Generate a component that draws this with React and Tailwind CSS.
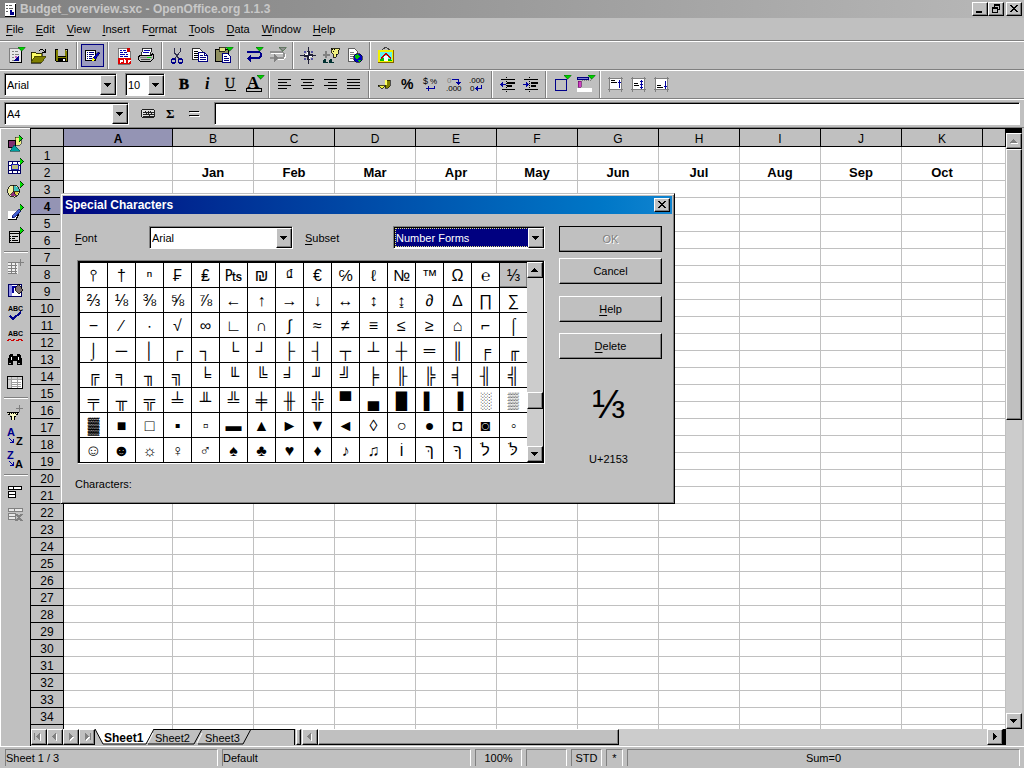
import React, { useState } from "react";

const raised =
  "border border-t-white border-l-white border-r-black border-b-black bg-[#c0c0c0] shadow-[inset_-1px_-1px_0_#808080]";
const sunken =
  "border border-t-[#808080] border-l-[#808080] border-r-white border-b-white shadow-[inset_1px_1px_0_#000]";

const menus = ["File", "Edit", "View", "Insert", "Format", "Tools", "Data", "Window", "Help"];
const menuKeys = [0, 0, 0, 0, 1, 0, 0, 0, 0];
const columns = ["A", "B", "C", "D", "E", "F", "G", "H", "I", "J", "K", ""];
const months = ["", "Jan", "Feb", "Mar", "Apr", "May", "Jun", "Jul", "Aug", "Sep", "Oct", ""];
const rows = Array.from({ length: 36 }, (_, i) => i + 1);

const glyphs = [
  "⫯", "†", "ⁿ", "₣", "₤", "₧", "₪", "₫", "€", "℅", "ℓ", "№", "™", "Ω", "℮", "⅓",
  "⅔", "⅛", "⅜", "⅝", "⅞", "←", "↑", "→", "↓", "↔", "↕", "↨", "∂", "∆", "∏", "∑",
  "−", "∕", "∙", "√", "∞", "∟", "∩", "∫", "≈", "≠", "≡", "≤", "≥", "⌂", "⌐", "⌠",
  "⌡", "─", "│", "┌", "┐", "└", "┘", "├", "┤", "┬", "┴", "┼", "═", "║", "╒", "╓",
  "╔", "╕", "╖", "╗", "╘", "╙", "╚", "╛", "╜", "╝", "╞", "╟", "╠", "╡", "╢", "╣",
  "╤", "╥", "╦", "╧", "╨", "╩", "╪", "╫", "╬", "▀", "▄", "█", "▌", "▐", "░", "▒",
  "▓", "■", "□", "▪", "▫", "▬", "▲", "►", "▼", "◄", "◊", "○", "●", "◘", "◙", "◦",
  "☺", "☻", "☼", "♀", "♂", "♠", "♣", "♥", "♦", "♪", "♫", "וֹ", "ךְ", "ךָ", "לֹ", "לֹּ",
];

const Underlined = ({ text, at = 0 }) => (
  <>
    {text.slice(0, at)}
    <span className="underline underline-offset-2">{text[at]}</span>
    {text.slice(at + 1)}
  </>
);

/* Small drop-down marks that sit on the corner of an icon */
const Down = ({ x = 14, y = 3, fill = "#00d000" }) => (
  <path d={`M${x} ${y}h7v1h-1v1h-1v1h-1v1h-1v-1h-1v-1h-1v-1h-1z`} fill={fill} stroke="#004000" strokeWidth="0.3" />
);
const Right = ({ x = 16, y = 3 }) => (
  <>
    <path d={`M${x} ${y - 1}h1v1h1v1h1v1h1v1h-1v1h-1v1h-1v1h-1z`} fill="#003000" />
    <path d={`M${x} ${y}h1v1h1v1h1v1h-1v1h-1v1h-1z`} fill="#00e000" />
  </>
);

const icons = {
  newDoc: (
    <>
      <path d="M5 4h12v15H5z" fill="#808080" />
      <path d="M6 5h11v13H6z" fill="#e8e8e8" />
      <path d="M17 5h1v14H6v-1h11z" fill="#000" />
      <path d="M8 7h2M8 10h2M8 13h2M8 16h2M11 7h3M11 10h4" stroke="#808080" transform="translate(0 .5)" />
      <path d="M15 12v5h-5v-1l2-1 1-2z" fill="#00008b" />
      <path d="M11 12h2v2h-2z" fill="#c060c0" />
      <Down />
    </>
  ),
  open: (
    <>
      <path d="M4 8h4l1 1h6v3h3l-4 7H4z" fill="#808000" stroke="#000" strokeWidth="0.6" />
      <path d="M5 9h3l1 1h5v2H8l-3 5z" fill="#ffff66" />
      <path d="M4 18 8 12h11l-4 6z" fill="#808000" stroke="#404000" strokeWidth="0.8" />
      <path d="M12 6h1V5h3v1h1v1h1V5h1v4h-4V8h2V7h-1V6h-3v1h-1z" fill="#000" />
    </>
  ),
  save: (
    <>
      <path d="M5 5h13v13H6l-1-1z" fill="#000" />
      <path d="M6 6h11v11H6z" fill="#808000" />
      <path d="M8 5h7v7H8z" fill="#c0c0c0" />
      <path d="M8 12h8v1H8zM8 14h8v4H8z" fill="#000" />
      <path d="M13 15h2v2h-2z" fill="#fff" />
      <path d="M16 6h1v1h-1z" fill="#c0c0c0" />
    </>
  ),
  edit: (
    <>
      <path d="M4.500 6.500h10v10h-10z" fill="#fff" stroke="#000" />
      <path d="M6 8.500h1M8 8.500h5M6 10.500h1M8 10.500h5M6 12.500h1M8 12.500h3M6 14.500h1M8 14.500h3" stroke="#000080" />
      <path d="m17 8 2 1-5 7-3 1 1-3z" fill="#0000c0" stroke="#000" strokeWidth="0.5" />
      <path d="m12 14 2 2-3 1z" fill="#ffff00" />
    </>
  ),
  pdf: (
    <>
      <path d="M6 4h9l3 3v13H6z" fill="#fff" stroke="#606060" strokeWidth="0.8" />
      <path d="M8 6.500h2M11 6.500h3M8 8.500h3M12 8.500h3M8 10.500h5M14 10.500h2M8 12.500h3M12 12.500h4" stroke="#0000b0" />
      <path d="M15 4h3v4h-3z" fill="#d00000" />
      <path d="M6 14h13v6H6z" fill="#e00000" />
      <path d="M8.500 19v-3h2v1h-2M12.500 15v3h1v-2M16.500 19v-3h2M16 17.500h2" stroke="#fff" fill="none" />
    </>
  ),
  print: (
    <>
      <path d="M8 4h9l-2 7H6z" fill="#fff" stroke="#000" strokeWidth="0.8" />
      <path d="M9 6.500h6M8 8.500h6" stroke="#0000b0" />
      <path d="M4.500 11.500h12l1-2 1 1v4l-3 3h-10l-2-2v-2z" fill="#c0c0c0" stroke="#000" />
      <path d="M5 13h12v1H5z" fill="#808080" />
      <path d="M6 15h9v1H6z" fill="#404040" />
      <path d="M12 13h4v1h-4z" fill="#00e000" />
    </>
  ),
  cut: (
    <g fill="none" stroke="#00008b">
      <path d="M8 4v4l6 8M14 4v4l-6 8" stroke="#303050" />
      <circle cx="7.500" cy="17" r="2" strokeWidth="1.500" />
      <circle cx="14.500" cy="17" r="2" strokeWidth="1.500" />
    </g>
  ),
  copy: (
    <>
      <path d="M3.500 4.500h7l3 3v8h-10z" fill="#fff" stroke="#303030" />
      <path d="M5 7.500h4M5 9.500h5M5 11.500h4M5 13.500h4" stroke="#000" />
      <path d="M9.500 8.500h6l3 3v6h-9z" fill="#fff" stroke="#000080" />
      <path d="M11 11.500h3M11 13.500h6M11 15.500h6M15.500 9v2.500h3" stroke="#000080" fill="none" />
    </>
  ),
  paste: (
    <>
      <path d="M3.500 5.500h13v12h-13z" fill="#909060" stroke="#000" />
      <path d="M7 3h6v4H7z" fill="#e0e080" stroke="#000" strokeWidth="0.7" />
      <path d="M10.500 9.500h5l3 3v6h-8z" fill="#fff" stroke="#000080" />
      <path d="M12 12.500h3M12 14.500h5M12 16.500h5" stroke="#000080" />
      <Down />
    </>
  ),
  undo: (
    <>
      <path d="M4 8h11q3 0 3 3t-3 3H6" fill="none" stroke="#00008b" strokeWidth="2" />
      <path d="M3 14h1l4-4v8z" fill="#00008b" />
      <Down x={13} />
    </>
  ),
  redo: (
    <>
      <path d="M5 9h11q3 0 3 3t-3 3h-4" fill="none" stroke="#fff" strokeWidth="2" />
      <path d="M4 8h11q3 0 3 3t-2 3h-5M4 14h5" fill="none" stroke="#909090" strokeWidth="2" />
      <path d="M8 10v8l4-4z" fill="#808080" />
      <Down x={13} fill="#909090" />
    </>
  ),
  navigator: (
    <>
      <path d="m11.500 3 1.500 6.500 6 2-6 2-1.500 6.500-1.500-6.500-7-2 7-2z" fill="#202038" />
      <path d="M11 6v5H6l4-1zM12 17v-5h5l-4 1z" fill="#fff" />
      <path d="M7 7h2v2H7zM14 14h2v2h-2zM14 7h2v2h-2zM7 14h2v2H7z" fill="#5050a0" />
    </>
  ),
  stylist: (
    <>
      <path d="M6 7v7M3 10.500h7" stroke="#808080" strokeWidth="2" />
      <path d="M11 4h8v2h-1v4h-2v3h-3v-3l-2-2z" fill="#f0f080" stroke="#000" strokeWidth="0.8" />
      <path d="M12 5h1v1h-1zM14 5h1v1h-1zM13 7h1v1h-1z" fill="#000" />
      <path d="M4 15h2v3h2v1H3v-2zM10 15h2v3h2v1H9v-2z" fill="#003030" />
    </>
  ),
  hyperlink: (
    <>
      <path d="M5.500 4.500h6l3 3v10h-9z" fill="#fff" stroke="#606060" />
      <path d="M7 8.500h4M7 10.500h6M7 12.500h4M7 14.500h3" stroke="#808080" />
      <circle cx="15" cy="14" r="4.500" fill="#0000c0" stroke="#000" strokeWidth="0.6" />
      <path d="m12 11 3-1 2 3-3 2-2-1zM15 16h3l-2 2z" fill="#00c000" />
    </>
  ),
  gallery: (
    <>
      <path d="m8 6 4-3 4 3" fill="none" stroke="#404040" />
      <path d="M4 6h16v13H4z" fill="#806000" />
      <path d="M4 6h15v12H4z" fill="#f0f000" />
      <path d="M6 8h12v9H6z" fill="#60f0f0" />
      <path d="M6 17v-2l5-2 7 3v1z" fill="#00c000" />
      <path d="M10 12h4v5h-4z" fill="#fff" />
      <path d="m7 14 5-4 5 4" fill="none" stroke="#c00000" strokeWidth="1.500" />
    </>
  ),
  bold: <text x="6" y="16" fontFamily="Liberation Serif" fontWeight="700" fontSize="15" stroke="#000" strokeWidth="0.5">B</text>,
  italic: <text x="9" y="16" fontFamily="Liberation Serif" fontStyle="italic" fontWeight="700" fontSize="16">i</text>,
  underline: (
    <>
      <text x="6" y="15" fontFamily="Liberation Serif" fontSize="14" stroke="#000" strokeWidth="0.3">U</text>
      <path d="M6 17.500h11" stroke="#000" />
    </>
  ),
  fontColor: (
    <>
      <text x="5" y="15" fontFamily="Liberation Serif" fontWeight="700" fontSize="17">A</text>
      <path d="M4.500 15.500h15v3h-15z" fill="#c0c0c0" stroke="#000" />
      <Down x={15} y={2} />
    </>
  ),
  left: <path d="M5 6.500h13M5 9.500h9M5 12.500h13M5 15.500h9" stroke="#000" />,
  center: <path d="M5 6.500h13M7 9.500h9M5 12.500h13M7 15.500h9" stroke="#000" />,
  right: <path d="M5 6.500h13M9 9.500h9M5 12.500h13M9 15.500h9" stroke="#000" />,
  justify: <path d="M5 6.500h13M5 9.500h13M5 12.500h13M5 15.500h13" stroke="#000" />,
  currency: (
    <>
      <path d="M12 7h5v6l-2 2h-3z" fill="#808000" stroke="#000" strokeWidth="0.6" />
      <path d="M12 7h2v5h-2z" fill="#ffff60" />
      <path d="M5 12h6v2l-1 1H8l-3-2z" fill="#f0f040" stroke="#000" strokeWidth="0.7" />
    </>
  ),
  percent: <text x="5" y="16" fontFamily="Liberation Sans" fontWeight="700" fontSize="14">%</text>,
  standard: (
    <>
      <text x="4" y="11" fontFamily="Liberation Sans" fontSize="9">$</text>
      <text x="11" y="11" fontFamily="Liberation Sans" fontSize="8">%</text>
      <path d="M7 15.500h8M9.500 13v5M15.500 13v3" stroke="#0000a0" fill="none" />
    </>
  ),
  addDecimal: (
    <>
      <text x="5" y="10" fontFamily="Liberation Sans" fontSize="8" fill="#808080">0</text>
      <path d="M10 6.500h6.500v4" stroke="#0000a0" fill="none" />
      <path d="M14 9h5l-2 3h-1z" fill="#0000a0" />
      <text x="4" y="18" fontFamily="Liberation Sans" fontSize="8">.000</text>
    </>
  ),
  removeDecimal: (
    <>
      <text x="4" y="10" fontFamily="Liberation Sans" fontSize="8">.000</text>
      <text x="5" y="18" fontFamily="Liberation Sans" fontSize="8">0</text>
      <path d="M11 15.500h5.500v-4" stroke="#0000a0" fill="none" />
      <path d="M13 13v5l-3-2v-1z" fill="#0000a0" />
    </>
  ),
  outdent: (
    <>
      <path d="M10.500 4v15" stroke="#000" strokeDasharray="1 1" />
      <path d="M5 6.500h14M6 16.500h13" stroke="#000" />
      <path d="M11 9.500h8M11 12.500h5" stroke="#000" strokeWidth="2" />
      <path d="M6 11.500h4" stroke="#0000a0" />
      <path d="M7 9v5l-3-2v-1z" fill="#0000a0" />
    </>
  ),
  indent: (
    <>
      <path d="M10.500 4v15" stroke="#000" strokeDasharray="1 1" />
      <path d="M5 6.500h14M6 16.500h13" stroke="#000" />
      <path d="M12 9.500h7M12 12.500h5" stroke="#000" strokeWidth="2" />
      <path d="M4 11.500h4" stroke="#0000a0" />
      <path d="M7 9v5l3-2v-1z" fill="#0000a0" />
    </>
  ),
  borders: (
    <>
      <path d="M5.500 6.500h11v11h-11z" fill="none" stroke="#00008b" />
      <Down x={14} y={2} />
    </>
  ),
  background: (
    <>
      <path d="M4.500 4.500h11v2h-11z" fill="#8080d0" stroke="#000080" />
      <path d="M5 8h3v6H5z" fill="#d040c0" stroke="#600060" strokeWidth="0.6" />
      <path d="M9 7.500h10" stroke="#808080" strokeDasharray="1 1" />
      <path d="M4 15h15v4H4z" fill="#fff" />
      <Down x={15} y={2} />
    </>
  ),
  alignTop: (
    <>
      <path d="M5 6h12v11H5z" fill="#fff" />
      <path d="M4 5.500h15M4 16.500h15M5.500 4v15M17.500 4v15" stroke="#808080" />
      <path d="M7 7.500h4M7 9.500h6" stroke="#000" />
      <path d="M15.500 15V7M14 9.500h3" stroke="#0000a0" fill="none" />
    </>
  ),
  alignMiddle: (
    <>
      <path d="M5 6h12v11H5z" fill="#fff" />
      <path d="M4 5.500h15M4 16.500h15M5.500 4v15M17.500 4v15" stroke="#808080" />
      <path d="M7 10.500h4M7 12.500h5" stroke="#000" />
      <path d="M14.500 7v9M13 8.500h3M13 11.500h3M13 14.500h3" stroke="#0000a0" fill="none" />
    </>
  ),
  alignBottom: (
    <>
      <path d="M5 6h12v11H5z" fill="#fff" />
      <path d="M4 5.500h15M4 16.500h15M5.500 4v15M17.500 4v15" stroke="#808080" />
      <path d="M7 12.500h4M7 14.500h6" stroke="#000" />
      <path d="M15.500 8v8M14 13.500h3" stroke="#0000a0" fill="none" />
    </>
  ),
  autopilot: (
    <>
      <path d="M5 7h12v1h1v7h-1v1H5v-1H4V8h1z" fill="#202020" />
      <path d="M6 9h2v1H6zM9 9h2v1H9zM12 9h1v1h-1zM14 9h3v1h-3zM6 11h3v1H6zM10 11h1v1h-1zM12 11h2v1h-2zM15 11h2v1h-2zM6 13h6v1H6zM13 13h4v1h-4zM5 8h12v1H5zM5 9h1v6H5z" fill="#e0e0e0" />
    </>
  ),
  sum: <text x="6" y="16" fontFamily="Liberation Serif" fontWeight="700" fontSize="13">Σ</text>,
  equals: (
    <>
      <path d="M7 10.500h10M7 14.500h10" stroke="#fff" />
      <path d="M6 9.500h10M6 13.500h10" stroke="#000" />
    </>
  ),
  insert: (
    <>
      <path d="M11 4h5q3 6 0 8h-5z" fill="#f0f080" stroke="#000" strokeWidth="0.5" />
      <path d="M4.500 7.500h7v7h-7z" fill="#803070" stroke="#000" />
      <path d="m10 12 6 6H6z" fill="#00a0a0" stroke="#004040" strokeWidth="0.6" />
      <Right x={15} y={3} />
    </>
  ),
  insertCells: (
    <>
      <path d="M4.500 5.500h12v12h-12z" fill="#fff" stroke="#000060" />
      <path d="M4 9.500h13M4 14.500h13M8.500 5v13M13.500 5v13" stroke="#000060" />
      <path d="M7.500 8.500h7v5h-7z" fill="#c0c080" stroke="#2020b0" />
      <Right x={16} y={3} />
    </>
  ),
  insertObject: (
    <>
      <circle cx="9.500" cy="12" r="6" fill="#f0f0a0" stroke="#000" strokeWidth="0.8" />
      <path d="M10 12V7a5 5 0 0 1 5 5z" fill="#40c0c0" />
      <path d="M10 12h5a5 5 0 0 1-3 4z" fill="#e0d040" />
      <path d="m10 12 2 5a6 6 0 0 1-6-1z" fill="#903080" />
      <path d="M9.500 6v6h6M9.500 12l-4 4M9.500 12l3 5" stroke="#000" strokeWidth="0.7" fill="none" />
      <Right x={16} y={3} />
    </>
  ),
  drawing: (
    <>
      <path d="M4 9h9v8H4z" fill="#fff" />
      <path d="M4 17.500h8l3-6" fill="none" stroke="#000" />
      <path d="m15 7 2 2-6 6-3 1 1-3z" fill="#4060d0" stroke="#000060" strokeWidth="0.7" />
      <Right x={16} y={3} />
    </>
  ),
  form: (
    <>
      <path d="M5.500 6.500h10v11h-10z" fill="#d8d8d8" stroke="#000" />
      <path d="M5 8.500h10M8 11.500h6M8 13.500h3M8 15.500h6" stroke="#000" />
      <path d="M6 11.500h1M6 13.500h1M6 15.500h1" stroke="#000" />
      <Right x={16} y={3} />
    </>
  ),
  autoformatOff: (
    <>
      <path d="M4 6h10v12H4z" fill="#f0f0f0" />
      <path d="M4 6.500h9M4 9.500h9M4 12.500h9M4 15.500h9M4 17.500h9M7.500 6v12M11.500 6v12" stroke="#808080" />
      <path d="M16.500 3v7M13 6.500h7" stroke="#808080" />
    </>
  ),
  themes: (
    <>
      <path d="M4.500 5.500h13v12h-13z" fill="#fff" stroke="#000060" />
      <path d="M5 6h3v11H5z" fill="#9090e8" />
      <path d="M8 7h5v2h-3v5H8z" fill="#0000a0" />
      <path d="m12 8 3-3 4 6-4 4-4-4z" fill="#807070" stroke="#000" strokeWidth="0.8" />
    </>
  ),
  spellcheck: (
    <>
      <text x="4" y="9" fontFamily="Liberation Sans" fontWeight="700" fontSize="7">ABC</text>
      <path d="m6 14 3 3 8-7" fill="none" stroke="#00008b" strokeWidth="2" />
    </>
  ),
  autoSpell: (
    <>
      <text x="4" y="11" fontFamily="Liberation Sans" fontWeight="700" fontSize="7">ABC</text>
      <path d="M3 16h2v-1h2v1h3v-1h2v1h3v-1h2v1h2v-1h-1v-1h-4v1h-3v-1H9v1H7v-1H4v1H3z" fill="#d00000" />
    </>
  ),
  find: (
    <>
      <path d="M6 6h3v2h4V6h3l2 5v6h-5v-4h-4v4H4v-6z" fill="#000" />
      <path d="M7.500 9v3M14.500 9v3" stroke="#fff" />
      <path d="M5 15.500h2M14 15.500h2" stroke="#b0b0b0" />
    </>
  ),
  dataSource: (
    <>
      <path d="M3.500 5.500h15v12h-15z" fill="#fff" stroke="#000" />
      <path d="M4 6h3v11H4zM4 6h14v2H4z" fill="#d0d0d0" />
      <path d="M4 8.500h14M7.500 6v11M13.500 6v11M8 11.500h9M8 13.500h9M8 15.500h9" stroke="#a0a0a0" />
    </>
  ),
  filter: (
    <>
      <path d="M4 11h10v2h-2v2h-1v3H8v-3H7v-2H4z" fill="#f8f8c0" />
      <path d="M3 10.500h12M4 12.500h2M12 12.500h2M7.500 14v4M10.500 14v4M6 14.500h2M10 14.500h2" stroke="#000" />
      <path d="M5 11.500h9" stroke="#000" strokeDasharray="1 1" />
      <path d="M15.500 3v7M12 6.500h7" stroke="#808080" />
    </>
  ),
  sortAsc: (
    <>
      <text x="3" y="11" fontFamily="Liberation Sans" fontWeight="700" fontSize="11" fill="#00008b">A</text>
      <text x="12" y="20" fontFamily="Liberation Sans" fontWeight="700" fontSize="11">Z</text>
      <path d="m5 13 4 4M9.500 14v3.500H6" stroke="#0000a0" fill="none" />
    </>
  ),
  sortDesc: (
    <>
      <text x="3" y="11" fontFamily="Liberation Sans" fontWeight="700" fontSize="11" fill="#00008b">Z</text>
      <text x="11" y="20" fontFamily="Liberation Sans" fontWeight="700" fontSize="11">A</text>
      <path d="m5 13 4 4M9.500 14v3.500H6" stroke="#0000a0" fill="none" />
    </>
  ),
  group: <path d="M4.500 7.500h5v3h-5zM9.500 7.500h8v3h-8zM4.500 12.500h7v3h-7zM4.500 15.500h7v3h-7z" fill="#fff" stroke="#000" />,
  ungroup: (
    <>
      <path d="M4.500 6.500h6v3h-6zM10.500 6.500h8v3h-8zM4.500 11.500h7v3h-7zM4.500 14.500h7v3h-7z" fill="#e8e8e8" stroke="#808080" />
      <path d="m12 12 6 7M18 12l-6 7" stroke="#808080" strokeWidth="2" />
    </>
  ),
};

const ToolButton = ({ name, active }) => (
  <button
    aria-label={name}
    className={`flex h-[23px] w-[23px] shrink-0 items-center justify-center ${
      active ? "bg-[#9c9cc0] outline -outline-offset-1 outline-[#000080]" : ""
    }`}
  >
    <svg width="23" height="23" viewBox="0 0 23 23" className="shrink-0" shapeRendering="crispEdges">
      {icons[name]}
    </svg>
  </button>
);

const Divider = () => (
  <span className="ml-[3px] mr-1 w-px shrink-0 self-stretch bg-[#808080] shadow-[1px_0_0_#fff]" />
);
const SideDivider = () => <span className="mb-1 mt-[3px] h-px w-6 bg-[#808080] shadow-[0_1px_0_#fff]" />;

const Bar = ({ children }) => (
  <div className="flex h-[29px] shrink-0 items-center border-b border-t border-b-[#808080] border-t-white px-1">
    {children}
  </div>
);

const arrows = {
  up: "M3 9v-1h1v-1h1v-1h1v-1h1v1h1v1h1v1h1v1z",
  down: "M3 5h7v1h-1v1h-1v1h-1v1h-1v-1h-1v-1h-1v-1h-1z",
  left: "M8 3v7h-1v-1h-1v-1h-1v-1h-1v-1h1v-1h1v-1h1v-1z",
  right: "M5 3v7h1v-1h1v-1h1v-1h1v-1h-1v-1h-1v-1h-1v-1z",
};

const Arrow = ({ dir, bar, muted }) => (
  <svg width="14" height="14" viewBox="0 0 14 14" className="shrink-0" shapeRendering="crispEdges">
    {muted && <path d={arrows[dir]} fill="#fff" transform="translate(1 1)" />}
    <path d={arrows[dir]} fill={muted ? "#808080" : "#000"} />
    {bar === "start" && <path d="M2 3h1v7H2z" fill="#808080" />}
    {bar === "end" && <path d="M10 3h1v7h-1z" fill="#808080" />}
  </svg>
);

const ScrollButton = ({ dir, bar, muted, label }) => (
  <button aria-label={label || dir} className={`flex h-4 w-4 shrink-0 items-center justify-center ${raised}`}>
    <Arrow dir={dir} bar={bar} muted={muted} />
  </button>
);

const Combo = ({ id, label, options, className, selected }) => (
  <div className={`relative flex h-[23px] shrink-0 bg-white p-px ${sunken} ${className}`}>
    <select
      id={id}
      aria-label={label}
      className={`min-w-0 flex-1 appearance-none pr-4 pt-px outline-none ${
        selected ? "border border-dotted border-[#e0e080] bg-[#000080] text-white" : "pl-px"
      }`}
    >
      {options.map((o) => (
        <option key={o}>{o}</option>
      ))}
    </select>
    <span className={`pointer-events-none absolute bottom-0 right-0 top-px flex w-4 items-center justify-center ${raised}`}>
      <Arrow dir="down" />
    </span>
  </div>
);

const WindowButton = ({ label, children }) => (
  <button aria-label={label} className={`flex h-[14px] w-4 items-center justify-center ${raised}`}>
    <svg width="12" height="10" viewBox="0 0 12 10" className="shrink-0" shapeRendering="crispEdges" fill="none" stroke="#000">
      {children}
    </svg>
  </button>
);

const Cross = () => (
  <path
    d="M2 1h2v1h1v1h2v-1h1v-1h2v1h-1v1h-1v1h-1v1h1v1h1v1h1v1h-2v-1h-1v-1h-2v1h-1v1h-2v-1h1v-1h1v-1h1v-1h-1v-1h-1v-1h-1z"
    fill="#000"
    stroke="none"
  />
);

const DialogButton = ({ children, className = "", disabled }) => (
  <button
    disabled={disabled}
    className={`h-[26px] w-full ${raised} ${disabled ? "text-[#808080] outline -outline-offset-1 outline-black [text-shadow:1px_1px_0_#fff]" : ""} ${className}`}
  >
    {children}
  </button>
);

const SpecialCharacters = () => {
  const [picked, setPicked] = useState("⅓");
  const code = picked.codePointAt(0).toString(16).toUpperCase().padStart(4, "0");

  return (
    <div
      role="dialog"
      aria-label="Special Characters"
      className="absolute left-[60px] top-[193px] z-10 w-[615px] border border-b-black border-l-[#c0c0c0] border-r-black border-t-[#c0c0c0] bg-[#c0c0c0] p-[2px] shadow-[inset_1px_1px_0_#fff,inset_-1px_-1px_0_#808080]"
    >
      <div className="flex h-[18px] items-center justify-between bg-linear-to-r from-[#000080] to-[#1084d0] px-[2px] text-[12px] font-bold text-white">
        <span>Special Characters</span>
        <WindowButton label="Close dialog">
          <Cross />
        </WindowButton>
      </div>

      <div className="flex gap-[14px] pb-2 pl-3 pr-[10px] pt-3">
        <div className="flex-1">
          <div className="flex items-center">
            <label htmlFor="font" className="w-[74px] pt-px">
              <Underlined text="Font" />
            </label>
            <Combo id="font" options={["Arial"]} className="w-[144px]" />
            <label htmlFor="subset" className="ml-3 w-[88px] pt-px">
              <Underlined text="Subset" />
            </label>
            <Combo id="subset" options={["Number Forms"]} className="flex-1" selected />
          </div>

          <div className={`ml-[2px] mt-[11px] flex h-[204px] bg-black p-px ${sunken}`}>
            <div className="grid flex-1 grid-cols-16 grid-rows-8 gap-px pl-px pt-px">
              {glyphs.map((g) => (
                <button
                  key={g}
                  onClick={() => setPicked(g)}
                  className={`flex items-center justify-center overflow-hidden pt-px font-['Liberation_Sans','DejaVu_Sans',sans-serif] text-[16px] leading-none ${
                    g === picked ? "bg-[#c0c0c0] shadow-[inset_-1px_-1px_0_#808080]" : "bg-white"
                  }`}
                >
                  {g}
                </button>
              ))}
            </div>
            <div className="flex w-4 flex-col bg-[#cccccc]">
              <ScrollButton dir="up" />
              <span className="flex-1" />
              <span className={`mb-[37px] h-[17px] ${raised}`} />
              <ScrollButton dir="down" />
            </div>
          </div>
        </div>

        <div className="flex w-[103px] flex-col">
          <DialogButton disabled>OK</DialogButton>
          <DialogButton className="mt-[6px]">Cancel</DialogButton>
          <DialogButton className="mt-3">
            <Underlined text="Help" />
          </DialogButton>
          <DialogButton className="mt-[11px]">
            <Underlined text="Delete" />
          </DialogButton>
          <div className="flex flex-col items-center pr-1 pt-6">
            <span className="font-['Liberation_Sans','DejaVu_Sans',sans-serif] text-[40px] leading-[42px]">{picked}</span>
            <span className="mt-[26px]">U+{code}</span>
          </div>
        </div>
      </div>
      <p className="pb-[9px] pl-3 leading-4">Characters:</p>
    </div>
  );
};

const StatusCell = ({ children, className }) => (
  <span className={`flex items-center border-l border-r border-t border-l-[#808080] border-r-white border-t-[#808080] pt-px ${className}`}>
    {children}
  </span>
);

export default function App() {
  return (
    <div className="relative flex h-screen flex-col overflow-hidden bg-[#c0c0c0] font-['Liberation_Sans',sans-serif] text-[11px] text-black">
      <header className="flex h-[18px] shrink-0 items-center bg-linear-to-r from-[#808080] to-[#b8b8b8] pl-1 pr-[2px] text-[12px] font-bold text-[#c8c8c8]">
        <svg width="14" height="16" viewBox="0 0 14 16" shapeRendering="crispEdges" className="mr-[2px]">
          <path d="M1 2h11v13H1z" fill="#fff" />
          <path d="M12 3v13H1v-1h10V3z" fill="#000" />
          <path d="M2 4h2v1H2zM2 7h2v1H2zM2 10h2v1H2zM5 4h3v1H5zM5 7h4v1H5z" fill="#606060" />
          <path d="M6 13V9h2v2h2v3H6z" fill="#00008b" />
        </svg>
        <h1 className="flex-1">Budget_overview.sxc - OpenOffice.org 1.1.3</h1>
        <WindowButton label="Minimize">
          <path d="M2 8h6" strokeWidth="2" />
        </WindowButton>
        <WindowButton label="Restore">
          <path d="M4.500 1.500h5v4h-5z" />
          <path d="M4 1h6" strokeWidth="2" />
          <path d="M2.500 4.500h5v4h-5z" fill="#c0c0c0" />
          <path d="M2 4h6" strokeWidth="2" />
        </WindowButton>
        <span className="w-[2px]" />
        <WindowButton label="Close">
          <Cross />
        </WindowButton>
      </header>

      <nav className="flex h-[23px] shrink-0 items-center gap-3 border-b border-[#808080] pl-[6px] pt-px">
        {menus.map((m, i) => (
          <button key={m}>
            <Underlined text={m} at={menuKeys[i]} />
          </button>
        ))}
      </nav>

      <Bar>
        <ToolButton name="newDoc" />
        <ToolButton name="open" />
        <ToolButton name="save" />
        <Divider />
        <ToolButton name="edit" active />
        <Divider />
        <ToolButton name="pdf" />
        <ToolButton name="print" />
        <Divider />
        <ToolButton name="cut" />
        <ToolButton name="copy" />
        <ToolButton name="paste" />
        <Divider />
        <ToolButton name="undo" />
        <ToolButton name="redo" />
        <Divider />
        <ToolButton name="navigator" />
        <ToolButton name="stylist" />
        <ToolButton name="hyperlink" />
        <Divider />
        <ToolButton name="gallery" />
      </Bar>

      <Bar>
        <Combo label="Font name" options={["Arial"]} className="mr-2 w-[113px]" />
        <Combo label="Font size" options={["10"]} className="mr-2 w-[40px]" />
        <ToolButton name="bold" />
        <ToolButton name="italic" />
        <ToolButton name="underline" />
        <ToolButton name="fontColor" />
        <Divider />
        <ToolButton name="left" />
        <ToolButton name="center" />
        <ToolButton name="right" />
        <ToolButton name="justify" />
        <Divider />
        <ToolButton name="currency" />
        <ToolButton name="percent" />
        <ToolButton name="standard" />
        <ToolButton name="addDecimal" />
        <ToolButton name="removeDecimal" />
        <Divider />
        <ToolButton name="outdent" />
        <ToolButton name="indent" />
        <Divider />
        <ToolButton name="borders" />
        <ToolButton name="background" />
        <Divider />
        <ToolButton name="alignTop" />
        <ToolButton name="alignMiddle" />
        <ToolButton name="alignBottom" />
      </Bar>

      <Bar>
        <Combo label="Name box" options={["A4"]} className="mr-2 w-[125px]" />
        <ToolButton name="autopilot" />
        <ToolButton name="sum" />
        <ToolButton name="equals" />
        <input aria-label="Formula" className={`ml-2 h-[23px] min-w-0 flex-1 bg-white px-1 outline-none ${sunken}`} />
      </Bar>

      <main className="flex min-h-0 flex-1 pr-[2px]">
        <aside className="flex w-[30px] shrink-0 flex-col items-center border-l border-t border-white pt-1">
          <ToolButton name="insert" />
          <ToolButton name="insertCells" />
          <ToolButton name="insertObject" />
          <ToolButton name="drawing" />
          <ToolButton name="form" />
          <SideDivider />
          <ToolButton name="autoformatOff" />
          <ToolButton name="themes" />
          <ToolButton name="spellcheck" />
          <ToolButton name="autoSpell" />
          <ToolButton name="find" />
          <ToolButton name="dataSource" />
          <SideDivider />
          <ToolButton name="filter" />
          <ToolButton name="sortAsc" />
          <ToolButton name="sortDesc" />
          <SideDivider />
          <ToolButton name="group" />
          <ToolButton name="ungroup" />
        </aside>

        <section className="flex min-w-0 flex-1 flex-col border-l border-t border-black">
          <div className="min-h-0 flex-1 overflow-hidden bg-white">
            <table className="w-full table-fixed border-separate border-spacing-0 text-[12px] leading-[14px]">
              <colgroup>
                <col className="w-[33px]" />
                <col className="w-[109px]" />
                {columns.slice(1, 11).map((c) => (
                  <col key={c} className="w-[81px]" />
                ))}
                <col />
              </colgroup>
              <thead>
                <tr className="h-[18px]">
                  <th className="border-b border-r border-black bg-[#c0c0c0] p-0" />
                  {columns.map((c, i) => (
                    <th
                      key={i}
                      className={`border-b border-r border-black p-0 pt-[2px] ${
                        i === 0 ? "bg-[#9494b4] font-bold" : "bg-[#c0c0c0] font-normal"
                      }`}
                    >
                      {c}
                    </th>
                  ))}
                </tr>
              </thead>
              <tbody>
                {rows.map((r) => (
                  <tr key={r} className="h-[17px]">
                    <th
                      className={`border-b border-r border-black p-0 pt-[2px] ${
                        r === 4 ? "bg-[#9494b4] font-bold" : "bg-[#c0c0c0] font-normal"
                      }`}
                    >
                      {r < 35 && r}
                    </th>
                    {columns.map((c, i) => (
                      <td key={i} className="border-b border-r border-[#c0c0c0] p-0 pt-[2px] text-center text-[13px] font-bold">
                        {r === 2 && months[i]}
                      </td>
                    ))}
                  </tr>
                ))}
              </tbody>
            </table>
          </div>

          <div className="flex h-[17px] shrink-0 items-start">
            <ScrollButton dir="left" bar="start" muted label="First sheet" />
            <ScrollButton dir="left" muted label="Previous sheet" />
            <ScrollButton dir="right" muted label="Next sheet" />
            <ScrollButton dir="right" bar="end" muted label="Last sheet" />
            <div className="relative flex h-4 w-[200px] shrink-0 items-center border-r border-t border-black pl-[9px]">
              <svg width="200" height="16" viewBox="0 0 200 16" className="absolute -top-px left-0">
                <path d="M103 15h45l8-15" fill="none" stroke="#000" />
                <path d="M53 15h46l8-15" fill="none" stroke="#000" />
                <path d="M0 0l8 15h43l8-15z" fill="#fff" />
                <path d="M0 0l8 15h43l8-15" fill="none" stroke="#000" />
                <path d="M58 4l-5 10M107 4l-5 10" stroke="#fff" />
              </svg>
              <button className="relative w-[51px] text-left text-[12px] font-bold leading-4">Sheet1</button>
              <button className="relative w-[50px] text-left leading-4">Sheet2</button>
              <button className="relative text-left leading-4">Sheet3</button>
            </div>
            <span className={`mx-px h-4 w-[5px] shrink-0 ${raised}`} />
            <ScrollButton dir="left" muted label="Scroll left" />
            <div className="h-4 flex-1 bg-[#cccccc]">
              <div className={`h-4 w-[45%] ${raised}`} />
            </div>
            <ScrollButton dir="right" label="Scroll right" />
            <span className="h-4 w-[3px] shrink-0 bg-black" />
          </div>
        </section>

        <div className="flex w-4 shrink-0 flex-col pb-[17px]">
          <span className="h-[5px] shrink-0 bg-black" />
          <ScrollButton dir="up" muted label="Scroll up" />
          <div className="flex-1 bg-[#cccccc]">
            <div className={`h-[48%] ${raised}`} />
          </div>
          <ScrollButton dir="down" label="Scroll down" />
        </div>
      </main>

      <footer className="flex h-[22px] shrink-0 gap-1 border-t border-white pb-[2px] pl-[5px] pr-1 pt-[2px]">
        <StatusCell className="w-[213px]">Sheet 1 / 3</StatusCell>
        <StatusCell className="w-[249px]">Default</StatusCell>
        <StatusCell className="w-[47px] justify-center">100%</StatusCell>
        <StatusCell className="w-[41px]" />
        <StatusCell className="w-[31px] justify-center">STD</StatusCell>
        <StatusCell className="w-[17px] justify-center">*</StatusCell>
        <StatusCell className="flex-1 justify-center">Sum=0</StatusCell>
      </footer>

      <SpecialCharacters />
    </div>
  );
}
